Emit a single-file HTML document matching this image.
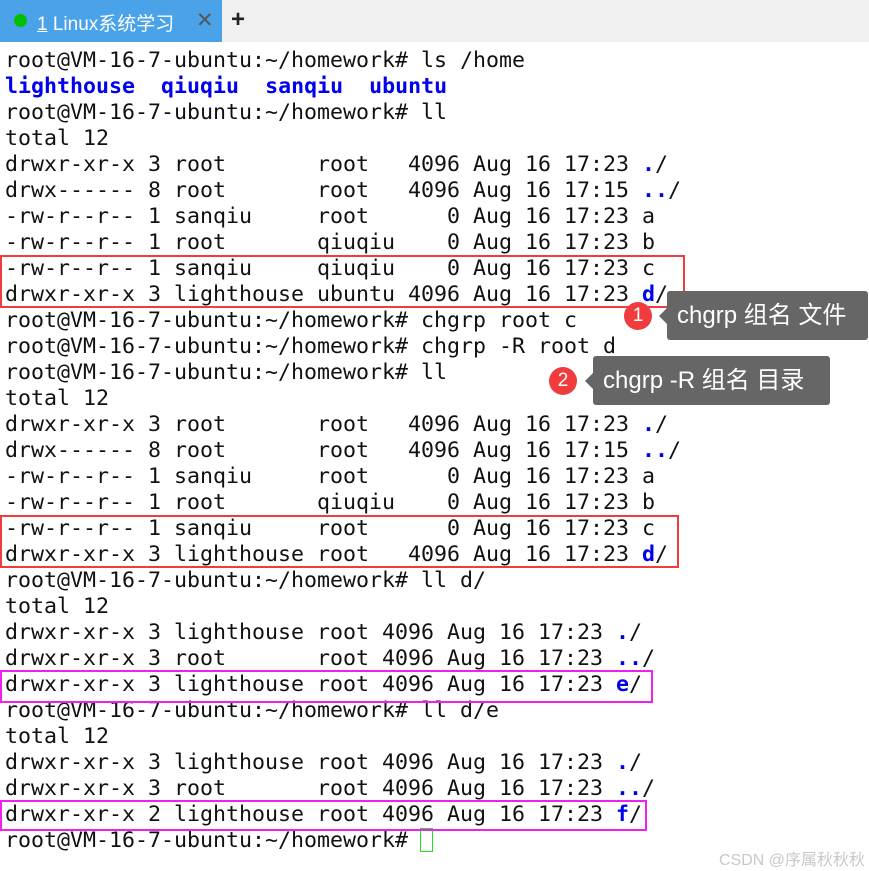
<!DOCTYPE html>
<html><head><meta charset="utf-8"><style>
body{margin:0;width:869px;height:871px;background:#fff;position:relative;overflow:hidden;font-family:"DejaVu Sans Mono","Liberation Mono",monospace}
.bar{position:absolute;left:0;top:0;width:869px;height:42px;background:#f0f0f0}
.tab{position:absolute;left:0;top:0;width:222px;height:42px;background:#4aa3e8}
.dot{position:absolute;left:14px;top:14px;width:13px;height:13px;border-radius:50%;background:#00c000}
.tt{position:absolute;left:37px;top:9px;color:#fff;font:19px "Liberation Sans","Noto Sans CJK SC",sans-serif}
.x{position:absolute;left:196px;top:8px;color:#555;font:21px "Liberation Sans",sans-serif}
.plus{position:absolute;left:231px;top:6px;color:#222;font:bold 24px "Liberation Sans",sans-serif}
pre{position:absolute;left:5px;top:48px;margin:0;font-size:21.6px;line-height:26px;color:#111}
b{color:#0000ee}
.box{position:absolute;border:2px solid #f03c3c}
.m{border-color:#f020f0}
.tip{position:absolute;background:#666;color:#fff;font:24px "Liberation Sans","Noto Sans CJK SC",sans-serif;border-radius:3px;line-height:49px;padding-left:10px;box-sizing:border-box}
.tip:before{content:"";position:absolute;left:-8px;top:17px;border:8px solid transparent;border-left:0;border-right-color:#666}
.c{position:absolute;width:28px;height:28px;border-radius:50%;background:#f03c3c;color:#fff;font:19px "Liberation Sans",sans-serif;text-align:center;line-height:28px}
</style></head><body>
<div class="bar"><div class="tab"><div class="dot"></div><div class="tt"><u>1</u> Linux系统学习</div><div class="x">✕</div></div><div class="plus">+</div></div>
<pre>root@VM-16-7-ubuntu:~/homework# ls /home
<b>lighthouse</b>  <b>qiuqiu</b>  <b>sanqiu</b>  <b>ubuntu</b>
root@VM-16-7-ubuntu:~/homework# ll
total 12
drwxr-xr-x 3 root       root   4096 Aug 16 17:23 <b>.</b>/
drwx------ 8 root       root   4096 Aug 16 17:15 <b>..</b>/
-rw-r--r-- 1 sanqiu     root      0 Aug 16 17:23 a
-rw-r--r-- 1 root       qiuqiu    0 Aug 16 17:23 b
-rw-r--r-- 1 sanqiu     qiuqiu    0 Aug 16 17:23 c
drwxr-xr-x 3 lighthouse ubuntu 4096 Aug 16 17:23 <b>d</b>/
root@VM-16-7-ubuntu:~/homework# chgrp root c
root@VM-16-7-ubuntu:~/homework# chgrp -R root d
root@VM-16-7-ubuntu:~/homework# ll
total 12
drwxr-xr-x 3 root       root   4096 Aug 16 17:23 <b>.</b>/
drwx------ 8 root       root   4096 Aug 16 17:15 <b>..</b>/
-rw-r--r-- 1 sanqiu     root      0 Aug 16 17:23 a
-rw-r--r-- 1 root       qiuqiu    0 Aug 16 17:23 b
-rw-r--r-- 1 sanqiu     root      0 Aug 16 17:23 c
drwxr-xr-x 3 lighthouse root   4096 Aug 16 17:23 <b>d</b>/
root@VM-16-7-ubuntu:~/homework# ll d/
total 12
drwxr-xr-x 3 lighthouse root 4096 Aug 16 17:23 <b>.</b>/
drwxr-xr-x 3 root       root 4096 Aug 16 17:23 <b>..</b>/
drwxr-xr-x 3 lighthouse root 4096 Aug 16 17:23 <b>e</b>/
root@VM-16-7-ubuntu:~/homework# ll d/e
total 12
drwxr-xr-x 3 lighthouse root 4096 Aug 16 17:23 <b>.</b>/
drwxr-xr-x 3 root       root 4096 Aug 16 17:23 <b>..</b>/
drwxr-xr-x 2 lighthouse root 4096 Aug 16 17:23 <b>f</b>/
root@VM-16-7-ubuntu:~/homework# </pre>
<div style="position:absolute;left:420px;top:828px;width:11px;height:22px;border:1px solid #20e020"></div>
<div class="box" style="left:0;top:255px;width:681px;height:49px"></div>
<div class="box" style="left:0;top:515px;width:675px;height:49px"></div>
<div class="box m" style="left:0;top:670px;width:649px;height:29px"></div>
<div class="box m" style="left:0;top:800px;width:643px;height:27px"></div>
<div class="tip" style="left:667px;top:291px;width:201px;height:49px">chgrp 组名 文件</div>
<div class="c" style="left:624px;top:302px">1</div>
<div class="tip" style="left:593px;top:356px;width:237px;height:49px">chgrp -R 组名 目录</div>
<div class="c" style="left:549px;top:367px">2</div>
<div style="position:absolute;left:719px;top:846px;color:#c8c8c8;font:16px 'Liberation Sans','Noto Sans CJK SC',sans-serif">CSDN @序属秋秋秋</div>
</body></html>
